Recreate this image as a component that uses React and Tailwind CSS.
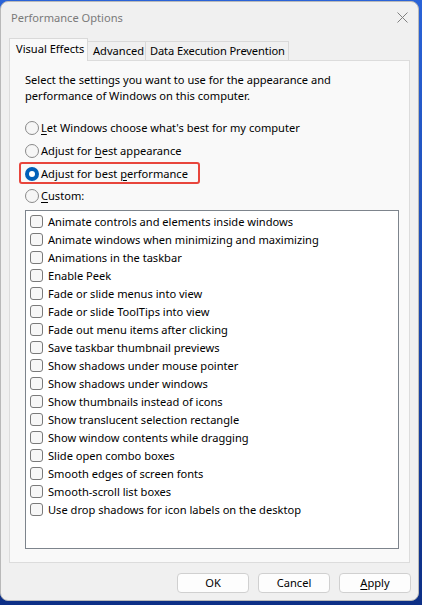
import React from "react";

const font = { fontFamily: '"Noto Sans", "Open Sans", sans-serif' };

function U({ children }) {
  return <span className="underline underline-offset-2 decoration-1">{children}</span>;
}

function Radio({ checked }) {
  if (checked) {
    return (
      <span className="w-[14px] h-[14px] rounded-full bg-[#005fb8] flex items-center justify-center shrink-0">
        <span className="w-[6px] h-[6px] rounded-full bg-white" />
      </span>
    );
  }
  return <span className="w-[14px] h-[14px] rounded-full border border-[#8a8a8a] bg-[#f6f6f6] shrink-0" />;
}

const items = [
  "Animate controls and elements inside windows",
  "Animate windows when minimizing and maximizing",
  "Animations in the taskbar",
  "Enable Peek",
  "Fade or slide menus into view",
  "Fade or slide ToolTips into view",
  "Fade out menu items after clicking",
  "Save taskbar thumbnail previews",
  "Show shadows under mouse pointer",
  "Show shadows under windows",
  "Show thumbnails instead of icons",
  "Show translucent selection rectangle",
  "Show window contents while dragging",
  "Slide open combo boxes",
  "Smooth edges of screen fonts",
  "Smooth-scroll list boxes",
  "Use drop shadows for icon labels on the desktop",
];

export default function App() {
  return (
    <div className="w-[422px] h-[605px] bg-gradient-to-b from-[#2a63d8] to-[#0d2f86] overflow-hidden" style={font}>
      <div className="mt-[1px] w-[419px] h-[600px] rounded-[8px] bg-[#f0f0f0] border border-[#b9b9b9] flex flex-col text-[11.1px] text-black leading-[16px]">
        {/* title bar */}
        <div className="h-[31px] flex items-center justify-between pl-[10px] pr-[9px] shrink-0">
          <span className="text-[11.1px] text-[#7a7a7a]">Performance Options</span>
          <svg width="11" height="11" viewBox="0 0 11 11" className="mr-[1px]">
            <path d="M0.5 0.5 L10.5 10.5 M10.5 0.5 L0.5 10.5" stroke="#808080" strokeWidth="1" />
          </svg>
        </div>
        {/* tabs */}
        <div className="mt-[5px] px-[8px] flex items-end h-[22px] relative z-10 shrink-0 whitespace-nowrap">
          <div className="h-[23px] -mb-[1px] pl-[6px] pb-[2px] flex items-center bg-[#f9f9f9] border border-[#d9d9d9] border-b-0 w-[79px]">
            Visual Effects
          </div>
          <div className="h-[19px] pl-[5px] flex items-center bg-[#f0f0f0] border border-[#d9d9d9] border-b-0 border-l-0 w-[58px]">
            Advanced
          </div>
          <div className="h-[19px] pl-[4px] pr-[3px] flex items-center bg-[#f0f0f0] border border-[#d9d9d9] border-b-0 border-l-0 tracking-[-0.1px]">
            Data Execution Prevention
          </div>
        </div>
        {/* panel */}
        <div className="mx-[8px] h-[503px] bg-[#f9f9f9] border border-[#dcdcdc] pt-[11px] pl-[15px] pr-[12px] flex flex-col shrink-0">
          <p className="leading-[16px]">
            Select the settings you want to use for the appearance and
            <br />
            performance of Windows on this computer.
          </p>
          <div className="mt-[13px] flex flex-col">
            <div className="h-[22.7px] flex items-center gap-[2px]">
              <Radio />
              <span><U>L</U>et Windows choose what's best for my computer</span>
            </div>
            <div className="h-[22.7px] flex items-center gap-[2px]">
              <Radio />
              <span>Adjust for <U>b</U>est appearance</span>
            </div>
            <div className="h-[22.7px] flex items-center gap-[2px] relative">
              <div className="absolute left-[-6px] top-[0px] w-[181px] h-[22px] border-2 border-[#e8453c] rounded-[3px]" />
              <Radio checked />
              <span>Adjust for best <U>p</U>erformance</span>
            </div>
            <div className="h-[22.7px] flex items-center gap-[2px]">
              <Radio />
              <span><U>C</U>ustom:</span>
            </div>
          </div>
          <div className="mt-[2px] w-[374px] h-[339px] bg-white border border-[#7d848c] pt-[2px] flex flex-col">
            {items.map((t) => (
              <div key={t} className="h-[18px] flex items-center pl-[4px] gap-[5px]">
                <span className="w-[13px] h-[13px] rounded-[3px] border border-[#7a7a7a] bg-[#f7f7f7] shrink-0" />
                <span>{t}</span>
              </div>
            ))}
          </div>
        </div>
        {/* buttons */}
        <div className="flex justify-end gap-[9px] pr-[7px] mt-[10px]">
          <button className="w-[72px] h-[20px] bg-[#fdfdfd] border border-[#d0d0d0] rounded-[4px] flex items-center justify-center">OK</button>
          <button className="w-[72px] h-[20px] bg-[#fdfdfd] border border-[#d0d0d0] rounded-[4px] flex items-center justify-center">Cancel</button>
          <button className="w-[72px] h-[20px] bg-[#fdfdfd] border border-[#d0d0d0] rounded-[4px] flex items-center justify-center"><span><U>A</U>pply</span></button>
        </div>
      </div>
    </div>
  );
}
